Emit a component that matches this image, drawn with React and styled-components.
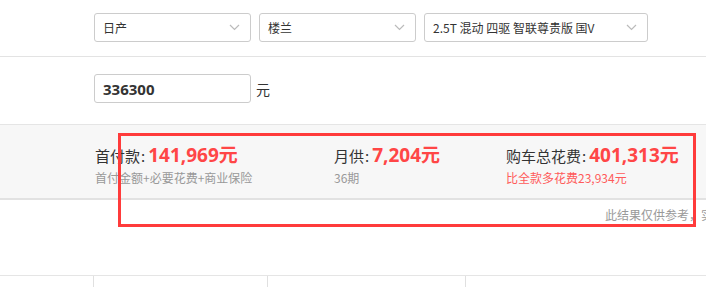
import React from 'react';
import styled, { createGlobalStyle } from 'styled-components';

const GlobalStyle = createGlobalStyle`
  html, body {
    margin: 0;
    padding: 0;
    overflow: hidden;
    background: #fff;
  }
  body {
    font-family: "Noto Sans CJK SC", "Noto Sans", sans-serif;
    color: #333;
  }
`;

const Page = styled.div`
  position: relative;
  width: 706px;
  height: 287px;
  overflow: hidden;
`;

const FormRow = styled.div`
  display: flex;
  align-items: center;
  padding: ${props => props.pad};
  padding-left: 94px;
  border-bottom: ${props => (props.line ? '1px solid #e3e3e3' : 'none')};
`;

const Selects = styled.div`
  display: flex;
  gap: 8px;
`;

const SelectBox = styled.div`
  box-sizing: border-box;
  width: ${props => props.w}px;
  height: 29px;
  border: 1px solid #ccc;
  border-radius: 3px;
  display: flex;
  align-items: center;
  justify-content: space-between;
  padding: 0 10px 0 8px;
  font-size: 12px;
  color: #333;
  white-space: nowrap;
`;

const PriceInput = styled.div`
  box-sizing: border-box;
  width: 157px;
  height: 29px;
  border: 1px solid #ccc;
  border-radius: 3px;
  display: flex;
  align-items: center;
  padding-left: 8px;
  font-family: "Noto Sans", sans-serif;
  font-weight: 700;
  font-size: 15px;
  color: #333;
`;

const Unit = styled.span`
  margin-left: 5px;
  font-size: 14px;
  color: #333;
`;

const Band = styled.div`
  background: #f7f7f7;
  border-top: 1px solid #e5e5e5;
  border-bottom: 2px solid #e2e2e2;
  height: 73px;
  display: grid;
  grid-template-columns: 239px 172px 1fr;
  padding-left: 95px;
`;

const Item = styled.div`
  padding-top: 15px;
`;

const MainLine = styled.div`
  display: flex;
  align-items: baseline;
  height: 27px;
  white-space: nowrap;
`;

const Label = styled.span`
  font-size: 15px;
  color: #333;
`;

const Colon = styled.span`
  font-size: 15px;
  margin: 0 3px 0 1px;
`;

const Amount = styled.span`
  font-family: "Noto Sans", sans-serif;
  font-weight: 700;
  font-size: 19px;
  color: #ff4646;
`;

const AmountUnit = styled.span`
  font-weight: 700;
  font-size: 19px;
  color: #ff4646;
`;

const Sub = styled.div`
  margin-top: 3px;
  font-size: 12px;
  line-height: 16px;
  color: ${props => (props.red ? '#ff5a5a' : '#999')};
  white-space: nowrap;
`;

const Note = styled.div`
  padding: 7px 0 0 605px;
  font-size: 12px;
  line-height: 16px;
  color: #999;
  white-space: nowrap;
`;

const Table = styled.div`
  margin-top: 52px;
  border-top: 1px solid #e5e5e5;
  display: grid;
  grid-template-columns: 93px 174px 198px 1fr;
  height: 20px;
`;

const Cell = styled.div`
  border-left: ${props => (props.first ? 'none' : '1px solid #e0e0e0')};
`;

const Highlight = styled.div`
  position: absolute;
  left: 118px;
  top: 133px;
  width: 578px;
  height: 94px;
  box-sizing: border-box;
  border: 3px solid #ff3b3b;
  pointer-events: none;
`;

const Chevron = () => (
  <svg width="11" height="7" viewBox="0 0 11 7">
    <path d="M1 1l4.5 4.5L10 1" fill="none" stroke="#bbb" strokeWidth="1.2" />
  </svg>
);

const Select = ({ w, children }) => (
  <SelectBox w={w}>
    <span>{children}</span>
    <Chevron />
  </SelectBox>
);

const Result = ({ label, amount, sub, red }) => (
  <Item>
    <MainLine>
      <Label>{label}</Label>
      <Colon>:</Colon>
      <Amount>{amount}</Amount>
      <AmountUnit>元</AmountUnit>
    </MainLine>
    <Sub red={red}>{sub}</Sub>
  </Item>
);

const App = () => (
  <Page>
    <GlobalStyle />
    <FormRow pad="13px 0 14px" line>
      <Selects>
        <Select w={157}>日产</Select>
        <Select w={157}>楼兰</Select>
        <Select w={224}>2.5T 混动 四驱 智联尊贵版 国V</Select>
      </Selects>
    </FormRow>
    <FormRow pad="17px 0 21px">
      <PriceInput>336300</PriceInput>
      <Unit>元</Unit>
    </FormRow>
    <Band>
      <Result label="首付款" amount="141,969" sub="首付金额+必要花费+商业保险" />
      <Result label="月供" amount="7,204" sub="36期" />
      <Result label="购车总花费" amount="401,313" sub="比全款多花费23,934元" red />
    </Band>
    <Note>此结果仅供参考，实际费用以当地经销商报价为准</Note>
    <Table>
      <Cell first />
      <Cell />
      <Cell />
      <Cell />
    </Table>
    <Highlight />
  </Page>
);

export default App;
